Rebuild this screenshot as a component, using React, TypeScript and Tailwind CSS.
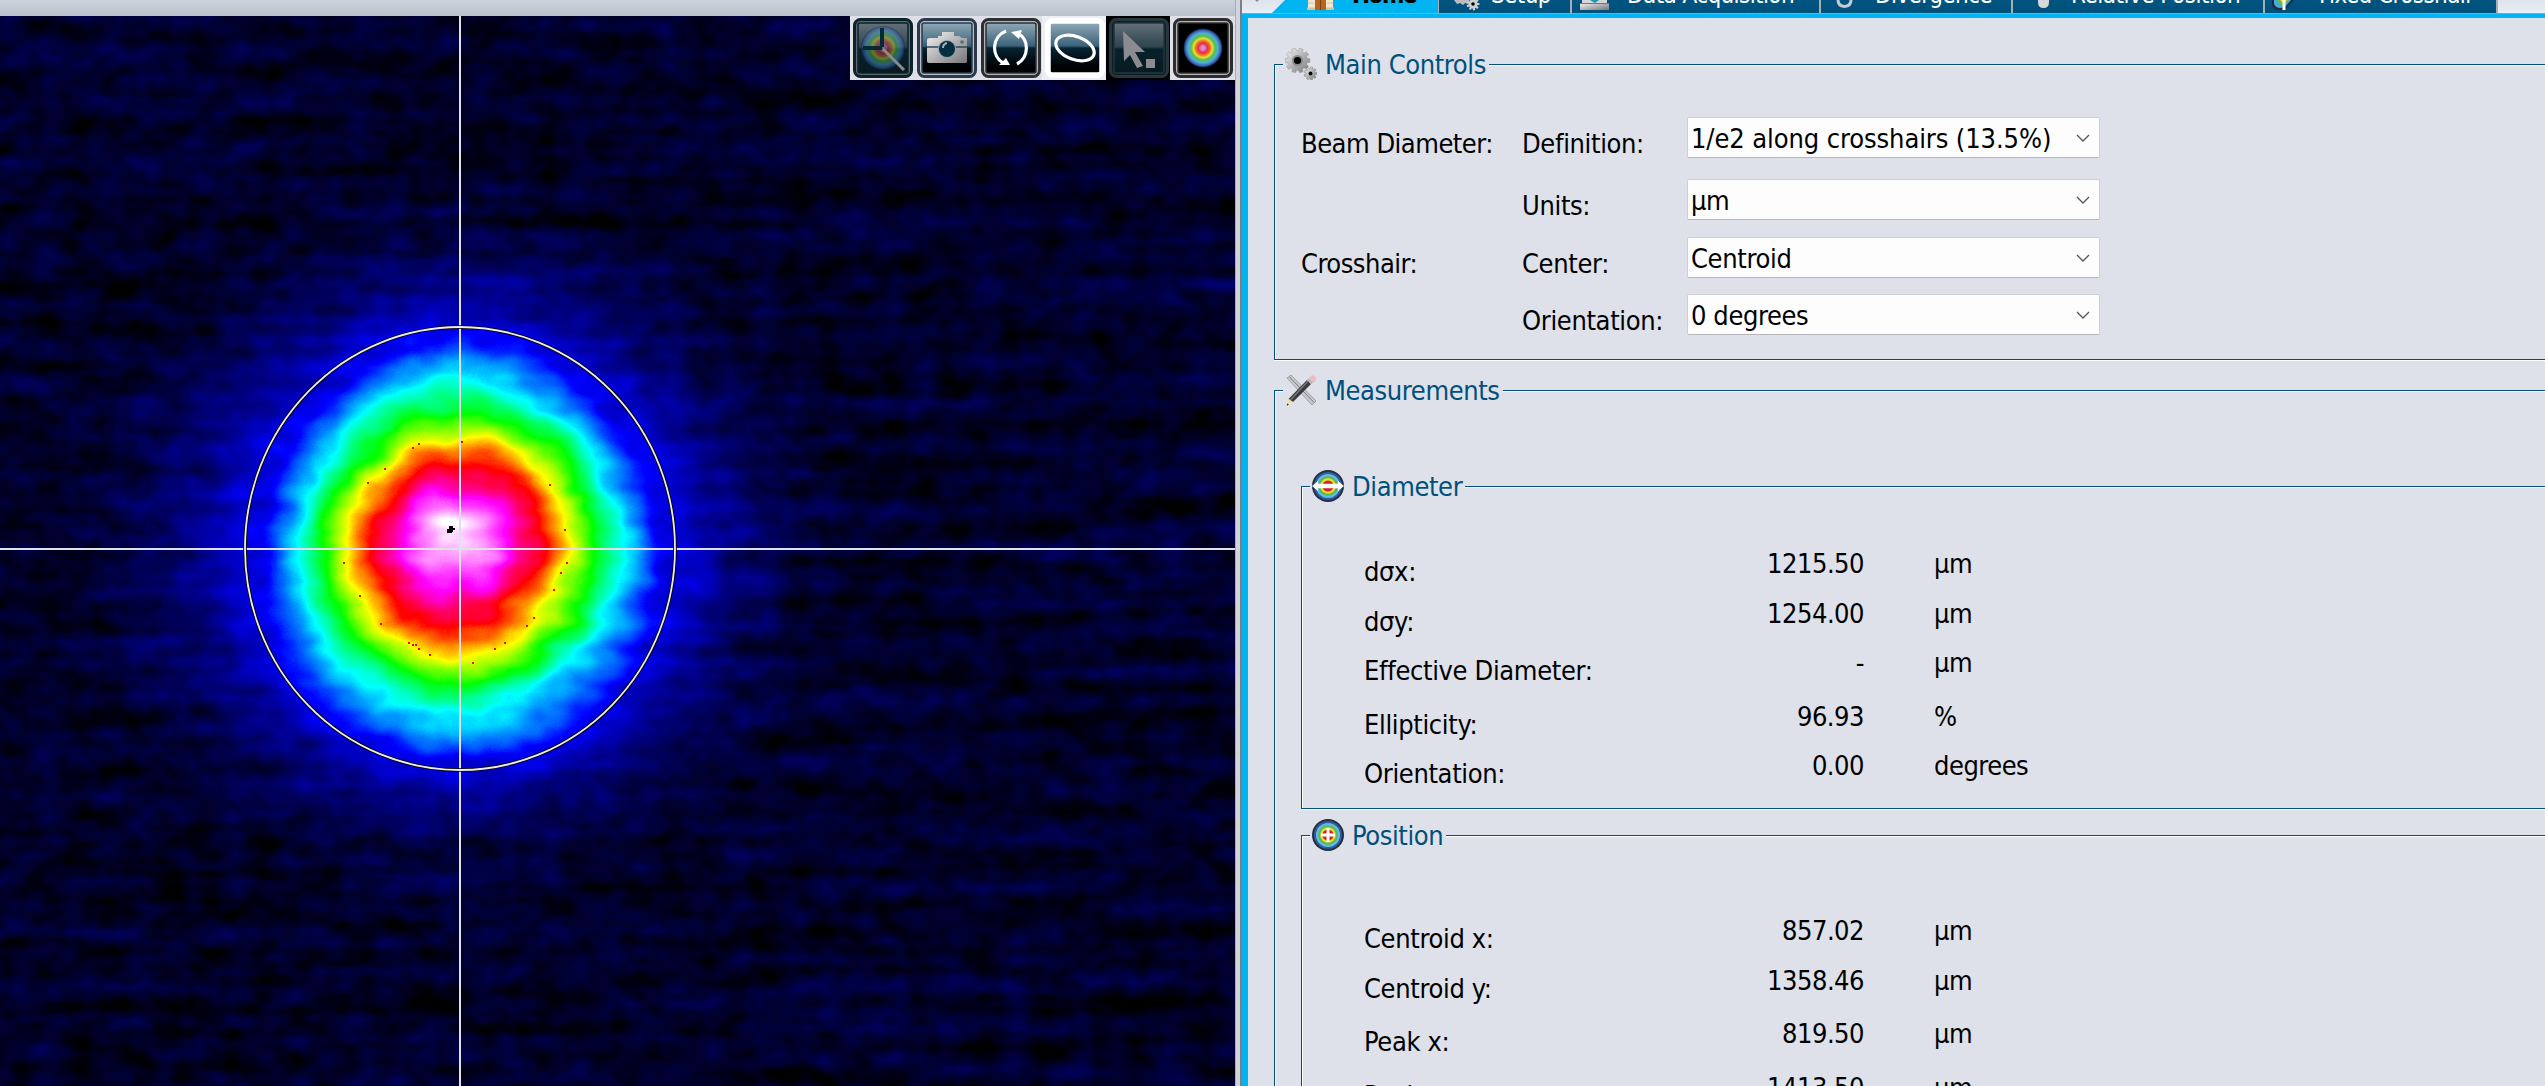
import React from "react";

/* ---------- Beam profile ---------- */

// Contour radii for 16 directions, clockwise starting at east.
const CONTOURS: { v: number; r: number[] }[] = [
  { v: 0.18, r: [1060, 1040, 1020, 1000, 1010, 1010, 1020, 1050, 1080, 1060, 1040, 1030, 1020, 1010, 1020, 1040] },
  { v: 0.32, r: [860, 850, 850, 850, 850, 850, 860, 880, 890, 880, 870, 860, 860, 850, 850, 850] },
  { v: 0.57, r: [725, 715, 715, 725, 730, 720, 715, 715, 720, 720, 715, 725, 740, 725, 710, 715] },
  { v: 1, r: [560, 575, 605, 615, 615, 600, 600, 570, 545, 550, 565, 590, 610, 595, 570, 555] },
  { v: 2, r: [462, 450, 447, 466, 484, 477, 473, 456, 458, 446, 463, 493, 502, 476, 467, 445] },
  { v: 3, r: [382, 375, 369, 382, 399, 387, 387, 383, 383, 397, 375, 405, 396, 394, 404, 378] },
  { v: 4, r: [300, 293, 292, 310, 324, 318, 309, 321, 323, 325, 318, 329, 313, 342, 306, 315] },
  { v: 5, r: [240, 226, 206, 221, 219, 231, 246, 244, 243, 249, 240, 255, 236, 243, 266, 240] },
  { v: 6, r: [140, 130, 135, 125, 109, 137, 155, 145, 164, 157, 184, 180, 161, 163, 168, 165] },
];

type Pt = [number, number];

const toPoints = (r: number[]): Pt[] =>
  r.map((d, i) => {
    const a = (i * Math.PI) / 8;
    return [460 + (d * Math.cos(a)) / 2.8, 533 + (d * Math.sin(a)) / 2.904];
  });

const peak: Pt[] = Array.from({ length: 16 }, (_, i) => {
  const a = (i * Math.PI) / 8;
  return [455 + 12 * Math.cos(a), 512 + 4 * Math.sin(a)];
});

const keys = [...CONTOURS.map((c) => ({ v: c.v, p: toPoints(c.r) })), { v: 7, p: peak }];

const smooth = (p: Pt[]) => {
  const n = p.length;
  let d = `M${p[0][0].toFixed(1)} ${p[0][1].toFixed(1)}`;
  for (let i = 0; i < n; i++) {
    const a = p[(i + n - 1) % n];
    const b = p[i];
    const c = p[(i + 1) % n];
    const e = p[(i + 2) % n];
    d += `C${(b[0] + (c[0] - a[0]) / 6).toFixed(1)} ${(b[1] + (c[1] - a[1]) / 6).toFixed(1)} ${(c[0] - (e[0] - b[0]) / 6).toFixed(1)} ${(c[1] - (e[1] - b[1]) / 6).toFixed(1)} ${c[0].toFixed(1)} ${c[1].toFixed(1)}`;
  }
  return d + "Z";
};

const layers: { d: string; g: number }[] = [];
for (let k = 0; k < keys.length - 1; k++) {
  const lo = keys[k];
  const hi = keys[k + 1];
  const steps = Math.max(3, Math.round(((hi.v - lo.v) * 255) / 7));
  for (let s = 0; s < steps; s++) {
    const t = s / steps;
    layers.push({
      d: smooth(lo.p.map((q, i) => [q[0] + (hi.p[i][0] - q[0]) * t, q[1] + (hi.p[i][1] - q[1]) * t] as Pt)),
      g: Math.round(((lo.v + (hi.v - lo.v) * t) / 7) * 255),
    });
  }
}

const MARKS: Pt[] = [
  [418, 427], [412, 431], [461, 425], [384, 452], [367, 466], [549, 468], [564, 513], [343, 546], [566, 546],
  [560, 556], [553, 573], [359, 579], [533, 601], [526, 609], [380, 607], [408, 626], [412, 628], [415, 628],
  [418, 632], [429, 638], [504, 626], [494, 632], [472, 646],
];

const BeamImage = () => (
  <svg className="block" width="1235" height="1070" viewBox="0 0 1235 1070">
    <defs>
      <filter id="beam" x="-60" y="-60" width="1355" height="1190" filterUnits="userSpaceOnUse" colorInterpolationFilters="sRGB">
        <feGaussianBlur in="SourceGraphic" stdDeviation="2.5" result="soft" />
        <feTurbulence type="fractalNoise" baseFrequency="0.022 0.03" numOctaves={2} seed={4} result="warp" />
        <feDisplacementMap in="soft" in2="warp" scale={16} xChannelSelector="R" yChannelSelector="G" result="blob" />
        <feTurbulence type="fractalNoise" baseFrequency="0.032 0.042" numOctaves={2} seed={11} result="n1" />
        <feColorMatrix in="n1" type="matrix" values="1 0 0 0 0 1 0 0 0 0 1 0 0 0 0 0 0 0 0 1" result="g1" />
        <feTurbulence type="fractalNoise" baseFrequency="0.003 0.05" numOctaves={2} seed={7} result="n2" />
        <feColorMatrix in="n2" type="matrix" values="1 0 0 0 0 1 0 0 0 0 1 0 0 0 0 0 0 0 0 1" result="g2" />
        <feComposite in="g1" in2="g2" operator="arithmetic" k1={0} k2={0.55} k3={0.45} k4={0} result="g" />
        <feComposite in="blob" in2="g" operator="arithmetic" k1={0} k2={1} k3={0.11} k4={-0.055} result="sum" />
        <feComponentTransfer in="sum">
          <feFuncR type="table" tableValues="0 0 0 0 1 1 1 1" />
          <feFuncG type="table" tableValues="0 0 1 1 1 0 0 1" />
          <feFuncB type="table" tableValues="0 1 1 0 0 0 1 1" />
          <feFuncA type="linear" slope={0} intercept={1} />
        </feComponentTransfer>
      </filter>
    </defs>
    <g filter="url(#beam)">
      <rect x="-60" y="-60" width="1355" height="1190" fill="rgb(6,6,6)" />
      {layers.map((l, i) => (
        <path key={i} d={l.d} fill={`rgb(${l.g},${l.g},${l.g})`} />
      ))}
    </g>
    {MARKS.map(([x, y], i) => (
      <rect key={i} x={x} y={y} width="2" height="2" fill="#f00" />
    ))}
    <path d="M449 510h4v2h2v2h-2v2h-1v1h-5v-4h2z" fill="#000" />
    <path d="M460 0V1070M0 533H1235" stroke="#e0e0e8" strokeWidth="2" shapeRendering="crispEdges" />
    <ellipse cx="460" cy="532.5" rx="215" ry="221.5" fill="none" stroke="#000" strokeWidth="3.6" />
    <ellipse cx="460" cy="532.5" rx="215" ry="221.5" fill="none" stroke="#ececf0" strokeWidth="1.8" />
  </svg>
);

/* ---------- Toolbar ---------- */

const Gradients = () => (
  <svg className="absolute size-0">
    <defs>
      <linearGradient id="glass" x1="0" y1="0" x2="0" y2="1">
        <stop offset="0" stopColor="#8fa8b6" />
        <stop offset=".46" stopColor="#3a6278" />
        <stop offset=".5" stopColor="#062433" />
        <stop offset=".85" stopColor="#000306" />
        <stop offset="1" stopColor="#000" />
      </linearGradient>
      <linearGradient id="dim" x1="0" y1="0" x2="0" y2="1">
        <stop offset="0" stopColor="#64707a" />
        <stop offset=".48" stopColor="#2c434e" />
        <stop offset=".52" stopColor="#07222c" />
        <stop offset="1" stopColor="#071a20" />
      </linearGradient>
      <linearGradient id="steel" x1="0" y1="0" x2="1" y2="1">
        <stop offset="0" stopColor="#f4f4f4" />
        <stop offset=".5" stopColor="#b4b4b6" />
        <stop offset="1" stopColor="#77777a" />
      </linearGradient>
      <radialGradient id="spot">
        <stop offset="0" stopColor="#e0a0e0" />
        <stop offset=".14" stopColor="#e070b0" />
        <stop offset=".24" stopColor="#e82c40" />
        <stop offset=".38" stopColor="#f07828" />
        <stop offset=".48" stopColor="#e8e030" />
        <stop offset=".62" stopColor="#50c050" />
        <stop offset=".76" stopColor="#50b0d8" />
        <stop offset=".9" stopColor="#3c68b8" />
        <stop offset="1" stopColor="#0c1c40" />
      </radialGradient>
    </defs>
  </svg>
);

const ToolButton = ({ border, inner, fill, bg = "#dfdfe7", children }: { border: string; inner: string; fill: string; bg?: string; children: React.ReactNode }) => (
  <svg className="block shrink-0" width="64" height="64" viewBox="0 0 64 64">
    <rect width="64" height="64" fill={bg} />
    <rect x="4.500" y="3.500" width="57" height="57" rx="6" fill={inner} stroke={border} strokeWidth="3" />
    <rect x="8" y="7" width="50" height="50" rx="2" fill={fill} stroke={border} strokeWidth="1.500" />
    {children}
  </svg>
);

const Toolbar = () => (
  <div className="absolute left-[850px] top-0 flex h-16 w-[385px] bg-[#dfdfe7]">
    <ToolButton border="#0b2228" inner="#5a686e" fill="url(#dim)">
      <circle cx="33" cy="32" r="22" fill="url(#spot)" opacity=".45" />
      <path d="M32 12v19M13 32h19" stroke="#032a36" strokeWidth="4" />
      <path d="M33 33 54 54" stroke="#8b8b8b" strokeWidth="3" />
    </ToolButton>
    <ToolButton border="#2a3a4c" inner="#b8bec8" fill="url(#glass)">
      <path d="M16 22h8v-2h4v-4h12v4h5l3 2h5v24q0 1-2 1H15q-2 0-2-2V24q0-2 3-2z" fill="url(#steel)" />
      <path d="M13 31h40" stroke="#2a4a5a" strokeWidth="1.500" />
      <circle cx="33" cy="33" r="9" fill="#8fa0aa" />
      <circle cx="33" cy="33" r="8" fill="#062d40" />
      <path d="M29 32q0-4 4-5" stroke="#9ab4c0" strokeWidth="2" fill="none" />
      <circle cx="48" cy="26" r="1.800" fill="#5a6a70" />
    </ToolButton>
    <ToolButton border="#2c3034" inner="#b2b4b6" fill="url(#glass)">
      <path d="M28 15A18 18 0 0 0 25 47M39 48A18 18 0 0 0 40 17" fill="none" stroke="#fff" strokeWidth="3.200" />
      <path d="m33 16 11-2-3 9zM32 49l-11 0 7-7z" fill="#fff" />
    </ToolButton>
    <ToolButton border="#fff" inner="#fff" fill="url(#glass)" bg="#eceef4">
      <ellipse cx="33" cy="32" rx="20" ry="11.500" transform="rotate(20 33 32)" fill="none" stroke="#fff" strokeWidth="3.200" />
    </ToolButton>
    <ToolButton border="#26363c" inner="#0b1e25" fill="url(#dim)" bg="#000">
      <path d="m17 15 22 21H29l8 14-6 2-7-13-6 6z" fill="#8b8b90" />
      <rect x="40" y="43" width="9" height="9" fill="#8b8b90" />
    </ToolButton>
    <ToolButton border="#2c2c2c" inner="#b4b4b4" fill="#000">
      <circle cx="33" cy="32" r="19.500" fill="url(#spot)" />
    </ToolButton>
  </div>
);

/* ---------- Icons ---------- */

const gearPath = (cx: number, cy: number, R: number, r: number, n: number) => {
  const pts: string[] = [];
  for (let i = 0; i < n; i++) {
    [[-0.36, r], [-0.24, R], [0.24, R], [0.36, r]].forEach(([o, d]) => {
      const a = ((i + o) * 2 * Math.PI) / n;
      pts.push(`${(cx + d * Math.cos(a)).toFixed(1)},${(cy + d * Math.sin(a)).toFixed(1)}`);
    });
  }
  return "M" + pts.join("L") + "Z";
};

const GearsIcon = () => (
  <svg className="size-8 shrink-0" viewBox="0 0 32 32">
    <path d={gearPath(12.5, 12.5, 12.5, 10, 10)} fill="url(#steel)" stroke="#a2a2a4" strokeWidth=".6" />
    <circle cx="12.500" cy="12.500" r="5.500" fill="#8a8a8c" />
    <circle cx="12.500" cy="12.500" r="3.600" fill="#000" />
    <path d={gearPath(25.5, 25.5, 6.5, 4.6, 9)} fill="url(#steel)" stroke="#88888a" strokeWidth=".6" />
    <circle cx="25.500" cy="25.500" r="1.900" fill="#000" />
  </svg>
);

const ToolsIcon = () => (
  <svg className="size-8 shrink-0" viewBox="0 0 32 32">
    <path d="m2 4 4-3 25 26-4 4z" fill="#c9cacd" stroke="#8f9093" strokeWidth=".8" />
    <path d="M4.500 3 29 28.500" stroke="#77787b" strokeWidth="1" />
    <path d="M22 6 26 10 8 28 3.500 25z" fill="#3a3a3c" />
    <path d="M23 7 5.500 26" stroke="#77777a" strokeWidth="1.400" />
    <path d="m22 6 2-2 4.500 4.500L26 10z" fill="#b9b9bb" />
    <path d="m24 4 3-3 4 2-.5 4-2 1.500z" fill="#eebcbc" />
    <path d="M3.500 25 8 28l-6 3.500z" fill="#efe0a0" />
    <path d="m2.300 29.500 1.500 1-2 1.300z" fill="#111" />
  </svg>
);

const Rings = ({ children }: { children: React.ReactNode }) => (
  <svg className="size-8 shrink-0" viewBox="0 0 32 32">
    <circle cx="16" cy="16" r="16" fill="#26303c" />
    <circle cx="16" cy="16" r="14" fill="#2c5aa8" />
    <circle cx="16" cy="16" r="12" fill="#62bde0" />
    <circle cx="16" cy="16" r="10" fill="#5cb85a" />
    <circle cx="16" cy="16" r="7.800" fill="#e4e02c" />
    <circle cx="16" cy="16" r="5.600" fill="#d8202c" />
    {children}
  </svg>
);

const DiameterIcon = () => (
  <Rings>
    <path d="m0 16 6-5v2.800h20V11l6 5-6 5v-2.800H6V21z" fill="#fff" />
  </Rings>
);

const PositionIcon = () => (
  <Rings>
    <path d="M16 9v14M9 16h14" stroke="#fff" strokeWidth="3" />
  </Rings>
);

/* ---------- Tabs ---------- */

const TabText = ({ className, children }: { className: string; children: React.ReactNode }) => (
  <span className={`block shrink-0 -mt-[21px] whitespace-nowrap text-2xl/8 ${className}`}>{children}</span>
);

const tabBase = "flex h-[13px] shrink-0 items-start overflow-hidden border-r-2 border-[#a9adb8] bg-linear-to-b from-[#005580] to-[#00507a] text-white";

const Tabs = () => (
  <div className="flex h-[14px] overflow-hidden border-b border-[#9aa0ac] bg-linear-to-b from-[#dfe3ec] to-[#e9edf5]">
    <div className="h-[13px] w-[29px] shrink-0">
      <svg className="block" width="29" height="13">
        <path d="M13 0h4l-2 2z" fill="#8a8f98" />
      </svg>
    </div>
    <div className="flex h-[14px] w-[167px] shrink-0 items-start bg-[#00b4f2] pl-[36px] [clip-path:polygon(14px_0,100%_0,100%_100%,0_100%)]">
      <svg className="block shrink-0" width="27" height="10">
        <path d="M1 0h25v9H1z" fill="#f1e8d3" />
        <path d="M0 8h8v2H0zM19 8h8v2h-8zM1 3h6M20 3h6" fill="#d9c496" stroke="#d9c496" />
        <path d="M8 0h11v10H8z" fill="#b3661f" />
        <path d="M13 0h1v10h-1z" fill="#7c4212" />
      </svg>
      <TabText className="ml-[18px] font-bold tracking-[-1.5px] text-black">Home</TabText>
    </div>
    <div className={`${tabBase} w-[134px] border-l pl-[14px]`}>
      <svg className="block shrink-0" width="27" height="13" viewBox="0 0 27 13">
        <path d="M1 0h15l-1 4-3-1-2 2-3-2-3 1z" fill="#bcbcbf" />
        <path d={gearPath(20, 4, 6.5, 4.5, 9)} fill="#d0d0d2" />
        <circle cx="20" cy="4" r="1.800" fill="#000" />
      </svg>
      <TabText className="ml-[11px] tracking-[-0.6px]">Setup</TabText>
    </div>
    <div className={`${tabBase} w-[249px] pl-[8px]`}>
      <svg className="block shrink-0" width="29" height="13">
        <path d="M2 0h25v3H2z" fill="#d6d6d8" />
        <path d="M10 0h9l-4 3z" fill="#1795b8" />
        <path d="M0 3h29v7H0z" fill="url(#steel)" />
        <path d="M0 3.500h29" stroke="#777" />
      </svg>
      <TabText className="ml-[18px] tracking-[-0.6px]">Data Acquisition</TabText>
    </div>
    <div className={`${tabBase} w-[192px] pl-[15px]`}>
      <svg className="block shrink-0" width="18" height="13">
        <path d="M2 0q0 6 6.500 6.500Q15 6 15 0" fill="none" stroke="#c9cbd0" strokeWidth="3" />
      </svg>
      <TabText className="ml-[21px] tracking-[-0.6px]">Divergence</TabText>
    </div>
    <div className={`${tabBase} w-[252px] pl-[24px]`}>
      <svg className="block shrink-0" width="13" height="13">
        <path d="M1 0h11v2q0 6-5.500 6T1 2z" fill="#d6d8dc" />
      </svg>
      <TabText className="ml-[21px] tracking-[-0.5px]">Relative Position</TabText>
    </div>
    <div className={`${tabBase} w-[233px] pl-[7px]`}>
      <svg className="block shrink-0" width="22" height="13">
        <path d="M0 0h22l-8 9-6 1q-6 0-8-4z" fill="#1e2c4e" />
        <path d="M2 0h17l-6 7-5 1q-4 0-6-4z" fill="#4ea8d8" />
        <path d="M5 0h12l-5 5H8z" fill="#5cc04a" />
        <path d="M8 0h7l-3 4z" fill="#f0d028" />
        <path d="M12 0v10" stroke="#fff" strokeWidth="3" />
      </svg>
      <TabText className="ml-[25px] tracking-[-0.6px]">Fixed Crosshair</TabText>
    </div>
  </div>
);

/* ---------- Panels ---------- */

const Group = ({ title, icon, className, children }: { title: string; icon: React.ReactNode; className: string; children: React.ReactNode }) => (
  <fieldset className={`m-0 min-w-0 border-y border-l border-[#00507c] p-0 pl-2 shadow-[inset_1px_1px_0_#fff,0_1px_0_#fff] ${className}`}>
    <legend className="h-8 bg-[#dee1e9] p-0 text-[#00507c]">
      <div className="flex h-8 items-center pl-[2px] pr-[3px]">
        {icon}
        <span className="ml-2 mt-0.5 whitespace-nowrap leading-8 tracking-[-0.4px]">{title}</span>
      </div>
    </legend>
    {children}
  </fieldset>
);

const Field = ({ group = "", label, value, valueClass = "", className }: { group?: string; label: string; value: string; valueClass?: string; className: string }) => (
  <div className={`flex items-start ${className}`}>
    <span className="mt-[11px] w-[221px] shrink-0 whitespace-nowrap leading-8">{group}</span>
    <span className="mt-[11px] w-[165px] shrink-0 whitespace-nowrap leading-8 tracking-[-0.35px]">{label}</span>
    <div className="flex h-[41px] w-[413px] shrink-0 items-start justify-between rounded-[2px] border border-[#d0d0d4] border-b-[#b4b6bc] bg-[#fdfdfd] pl-[3px] pr-[9px] pt-[5px]">
      <span className={`whitespace-nowrap leading-8 ${valueClass}`}>{value}</span>
      <svg className="mt-[11px]" width="14" height="9" viewBox="0 0 14 9">
        <path d="m1 1 6 6 6-6" fill="none" stroke="#555" strokeWidth="1.300" />
      </svg>
    </div>
  </div>
);

const Reading = ({ label, value, unit, className }: { label: string; value: string; unit: string; className: string }) => (
  <div className={`flex items-start whitespace-nowrap leading-8 ${className}`}>
    <span className="mt-2 w-[300px] shrink-0 tracking-[-0.35px]">{label}</span>
    <span className="w-[200px] shrink-0 text-right">{value}</span>
    <span className="ml-[70px]">{unit}</span>
  </div>
);

export default function App() {
  return (
    <div className="flex h-[1086px] w-[2545px] overflow-hidden bg-[#dee1e9] text-[27px] tracking-[-0.5px] text-black [font-family:'DejaVu_Sans_Condensed','DejaVu_Sans',sans-serif] [font-stretch:condensed]">
      <Gradients />
      <div className="flex w-[1235px] shrink-0 flex-col">
        <div className="h-4 shrink-0 bg-linear-to-b from-[#ccd3dd] to-[#bac1cb]" />
        <div className="relative h-[1070px] overflow-hidden">
          <BeamImage />
          <Toolbar />
        </div>
      </div>
      <div className="w-[5px] shrink-0 border-l border-[#a8aebb] bg-[#d0d4de]" />
      <div className="w-[2px] shrink-0 bg-[#7e7e80]" />
      <div className="flex min-w-0 flex-1 flex-col">
        <Tabs />
        <div className="flex flex-1 flex-col overflow-hidden border-l-[6px] border-t-4 border-[#00b4f2] pl-[26px] pt-[30px]">
          <Group title="Main Controls" icon={<GearsIcon />} className="h-[312px] shrink-0">
            <div className="pl-[18px] pt-[37px]">
              <Field group="Beam Diameter:" label="Definition:" value="1/e2 along crosshairs (13.5%)" valueClass="tracking-[-0.1px]" className="h-[62px]" />
              <Field label="Units:" value="µm" className="h-[58px]" />
              <Field group="Crosshair:" label="Center:" value="Centroid" valueClass="tracking-[-0.35px]" className="h-[57px]" />
              <Field label="Orientation:" value="0 degrees" valueClass="tracking-[-0.4px]" className="h-[41px]" />
            </div>
          </Group>
          <Group title="Measurements" icon={<ToolsIcon />} className="mt-[14px] h-[800px] shrink-0">
            <div className="flex flex-col pl-[18px] pt-[64px]">
              <Group title="Diameter" icon={<DiameterIcon />} className="h-[339px] shrink-0">
                <div className="pl-[54px] pt-[46px]">
                  <Reading label="dσx:" value="1215.50" unit="µm" className="h-[50px]" />
                  <Reading label="dσy:" value="1254.00" unit="µm" className="h-[49px]" />
                  <Reading label="Effective Diameter:" value="-" unit="µm" className="h-[54px]" />
                  <Reading label="Ellipticity:" value="96.93" unit="%" className="h-[49px]" />
                  <Reading label="Orientation:" value="0.00" unit="degrees" className="h-[40px]" />
                </div>
              </Group>
              <Group title="Position" icon={<PositionIcon />} className="mt-[10px] h-[400px] shrink-0">
                <div className="pl-[54px] pt-[64px]">
                  <Reading label="Centroid x:" value="857.02" unit="µm" className="h-[50px]" />
                  <Reading label="Centroid y:" value="1358.46" unit="µm" className="h-[53px]" />
                  <Reading label="Peak x:" value="819.50" unit="µm" className="h-[54px]" />
                  <Reading label="Peak y:" value="1413.50" unit="µm" className="h-[40px]" />
                </div>
              </Group>
            </div>
          </Group>
        </div>
      </div>
    </div>
  );
}
